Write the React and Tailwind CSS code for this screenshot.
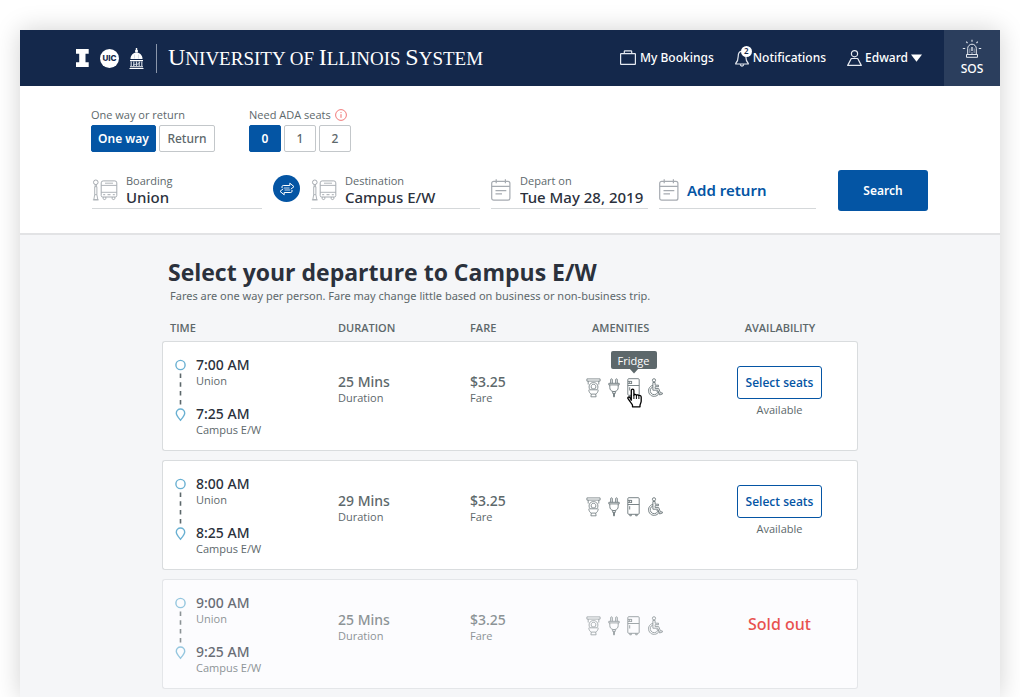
import React, { useState } from "react";

const ROWS = [
  { from: "7:00 AM", to: "7:25 AM", duration: "25 Mins", fare: "$3.25", available: true, hovered: true },
  { from: "8:00 AM", to: "8:25 AM", duration: "29 Mins", fare: "$3.25", available: true },
  { from: "9:00 AM", to: "9:25 AM", duration: "25 Mins", fare: "$3.25", available: false },
];

function BlockI() {
  return (
    <svg width="14" height="18" viewBox="0 0 14 18" fill="#fff" aria-hidden="true">
      <path d="M0 0h12.700v4.800H9.500v8.400h3.200V18H0v-4.800h3.200V4.800H0z" />
    </svg>
  );
}

function UicBadge() {
  return (
    <span className="flex h-[19px] w-[19px] items-center justify-center rounded-full bg-white font-[Inter,sans-serif] text-[8px] leading-none font-extrabold text-[#14284b]">
      UIC
    </span>
  );
}

function Dome() {
  return (
    <svg width="15" height="21" viewBox="0 0 15 21" fill="none" aria-hidden="true">
      <path d="M7.500 0v4" stroke="#fff" strokeWidth="1.400" />
      <circle cx="7.500" cy="3" r="1.500" fill="#fff" />
      <path d="M1.500 11C1.500 7 4.500 4.500 7.500 4.500s6 2.500 6 6.500z" fill="#fff" />
      <path d="M5.500 6.500v4M9.500 6.500v4" stroke="#b5bfce" strokeWidth=".5" />
      <path d="M1 12h13v1.200H1zM1 18.200h13v1H1zM.5 20h14v1H.5z" fill="#fff" />
      <path d="M2.200 13.500v4.500M4.800 13.500v4.500M7.500 13.500v4.500M10.200 13.500v4.500M12.800 13.500v4.500" stroke="#cdd4df" strokeWidth="1.200" />
      <path d="M4 17.500c1.500-2 5.500 0 7-3.500" stroke="#dfe4ec" strokeWidth=".9" />
    </svg>
  );
}

function Briefcase() {
  return (
    <svg width="16" height="16" viewBox="0 0 16 16" fill="none" stroke="#e6eaf1" strokeWidth="1.200" aria-hidden="true">
      <rect x=".6" y="3.600" width="14.800" height="10.800" rx=".5" />
      <path d="M4.300 3.500V1.500a.6.6 0 0 1 .6-.6h6.200a.6.6 0 0 1 .6.6v2" />
    </svg>
  );
}

function Bell() {
  return (
    <svg width="14" height="17" viewBox="0 0 14 17" fill="none" stroke="#e6eaf1" strokeWidth="1.200" strokeLinejoin="round" aria-hidden="true">
      <path d="M6.800 1.200C4 1.500 3.200 4 3.200 6.500c0 3-.6 5-2.500 7v.5h12.600v-.5c-1.900-2-2.500-4-2.500-7" />
      <path d="M5.300 14.300c.2 2.400 3.200 2.400 3.400 0" />
    </svg>
  );
}

function Person() {
  return (
    <svg width="15" height="17" viewBox="0 0 15 17" fill="none" stroke="#e6eaf1" strokeWidth="1.200" strokeLinejoin="round" aria-hidden="true">
      <circle cx="7.500" cy="3.700" r="3.100" />
      <path d="M4.300 8.500h6.400l3.600 6.900H.7z" />
    </svg>
  );
}

function Siren() {
  return (
    <svg width="20" height="20" viewBox="0 0 20 20" fill="none" stroke="#e6eaf1" aria-hidden="true">
      <path d="M5.700 15.500V9.500a4.300 4.300 0 0 1 8.600 0v6M4.500 15.500h11v2.800h-11z" />
      <path d="M10 8v4M10 13.500v1" strokeWidth="1.300" />
      <path d="M7.800 14V9.500M12.200 14V9.500" strokeWidth=".5" />
      <path d="M10 .8v2M4.300 2.600l1.200 1.500M15.700 2.600l-1.200 1.500M.8 9.500h2.400M16.800 9.500h2.400" strokeWidth="1.100" />
    </svg>
  );
}

function Info() {
  return (
    <svg width="12" height="12" viewBox="0 0 12 12" fill="none" stroke="#ef6b6b" aria-hidden="true">
      <circle cx="6" cy="6" r="5.400" strokeWidth=".9" />
      <path d="M6 5.200v3.600M6 3.100v1" />
    </svg>
  );
}

function BusStop() {
  return (
    <svg className="shrink-0" width="26" height="24" viewBox="0 0 26 24" fill="none" stroke="#a6abb1" aria-hidden="true">
      <circle cx="3.800" cy="4.300" r="2.300" />
      <path d="M3.200 6.600v2M4.400 6.600v2M2.700 8.700h2.200v8H2.700zM2.700 16.700l-.9 5h4l-.9-5M.9 21.900h5.800" strokeWidth=".9" />
      <path d="M11.200 2.900h11.600a2 2 0 0 1 2 2v12.600a1.500 1.500 0 0 1-1.500 1.500H10.700a1.500 1.500 0 0 1-1.500-1.500V4.900a2 2 0 0 1 2-2z" />
      <path d="M9.200 7.400h15.600M9.200 14.300h15.600M13 5.200h8" strokeWidth=".9" />
      <path d="M11.200 16.700h2M20.800 16.700h2M15.500 16.700h3M11.200 19v1.600c0 1.300 2.600 1.300 2.600 0V19M20.200 19v1.600c0 1.300 2.600 1.300 2.600 0V19" />
    </svg>
  );
}

function Calendar() {
  return (
    <svg className="shrink-0" width="20" height="22" viewBox="0 0 20 22" fill="none" stroke="#a6abb1" strokeWidth="1.200" aria-hidden="true">
      <rect x=".7" y="2.300" width="18.200" height="18.900" rx="2" />
      <path d="M.7 7.300h18.200M5.200.3v4M14.400.3v4M4.500 11.700h10.800M4.500 14.900h6.500" />
    </svg>
  );
}

function SwapArrows() {
  return (
    <svg width="18" height="14" viewBox="0 0 18 14" fill="none" stroke="#fff" strokeLinejoin="round" aria-hidden="true">
      <path d="M4 6V4.700c0-.7.500-1.200 1.200-1.200h6.600V1.200l4.200 3.400-3.200 2.600" />
      <path d="M14 8v1.300c0 .7-.5 1.200-1.200 1.200H6.200v2.300L2 9.400l3.200-2.600" />
      <path d="M6 6h5.500M6.500 8H12" strokeWidth=".8" />
    </svg>
  );
}

function Timeline() {
  return (
    <svg width="12" height="64" viewBox="0 0 12 64" fill="none" aria-hidden="true">
      <circle cx="6.500" cy="6" r="4.600" stroke="#69b0d2" strokeWidth="1.400" />
      <path d="M6.500 14.500V46" stroke="#5d686b" strokeWidth="1.600" strokeDasharray="4.500 4.300" />
      <path d="M6.500 61.200c-2-2.400-4.200-4.700-4.200-7a4.200 4.200 0 0 1 8.400 0c0 2.300-2.200 4.600-4.200 7z" stroke="#69b0d2" strokeWidth="1.400" />
    </svg>
  );
}

function Toilet() {
  return (
    <svg width="15" height="20" viewBox="0 0 15 20" fill="none" stroke="#6c777b" strokeWidth=".8" aria-hidden="true">
      <path d="M.9.9h13.200v2.200H.9zM2.200 3.100v3.400M12.800 3.100v3.400" />
      <path d="M3.900 11.800C1.800 8 4 4.600 7.500 4.600s5.700 3.400 3.600 7.200z" />
      <path d="M5.500 10.300c-.9-2.200.1-4 2-4s2.900 1.800 2 4c-.9.700-3.100.7-4 0z" />
      <path d="M2.800 11.800c.1 2.200 1.200 3.700 2.500 4.300h4.400c1.300-.6 2.400-2.100 2.500-4.300M5.300 16.100l-.4 2.700h5.200l-.4-2.700" />
    </svg>
  );
}

function Plug() {
  return (
    <svg width="12" height="20" viewBox="0 0 12 20" fill="none" stroke="#6c777b" strokeWidth=".9" aria-hidden="true">
      <path d="M2.700 5.300V1.500c0-.9 1.600-.9 1.600 0v3.800M7.700 5.300V1.500c0-.9 1.600-.9 1.600 0v3.800" />
      <path d="M.8 5.300h10.400v1.600H.8zM1.800 6.900v2.600c0 2.300 1.500 3.700 3.200 4h2c1.700-.3 3.200-1.700 3.200-4V6.900M4.700 13.500v1.900h2.600v-1.900M5.500 15.400v3.400h1v-3.400" />
    </svg>
  );
}

function Fridge() {
  return (
    <svg width="13" height="20" viewBox="0 0 13 20" fill="none" stroke="#6c777b" strokeWidth=".9" aria-hidden="true">
      <rect x=".8" y=".7" width="11.400" height="16.600" rx="1" />
      <path d="M.8 7.500h11.400M2.800 17.300v1.500h1.500v-1.500M8.700 17.300v1.500h1.500v-1.500M2.700 9.200v3.300" />
      <path d="M1 3.400h3.600M1 5.400h3.600M2.300 3.400v2M4.600 3v3" />
    </svg>
  );
}

function Wheelchair() {
  return (
    <svg width="16" height="20" viewBox="0 0 16 20" fill="none" stroke="#6c777b" strokeWidth=".9" strokeLinejoin="round" aria-hidden="true">
      <circle cx="7" cy="2.300" r="1.600" />
      <path d="M5.900 4.500h2.200v2.700h3.400v1.500H8.100v1.900h3.600l1.900 4.600 1.500-.5.400 1.300-2.900 1-1.900-4.800H5.900z" />
      <path d="M5.900 7.300a5.600 5.600 0 1 0 6.100 8.200l-.9-2.200M5.900 8.900a4 4 0 1 0 4.700 5.900l-.7-1.700" />
    </svg>
  );
}

function HandCursor() {
  return (
    <svg className="absolute top-[10px] left-0" width="16" height="20" viewBox="0 0 16 20" aria-hidden="true">
      <path
        d="M4.300 12.200V2.600c0-2 2.600-2 2.600 0v4.600c.2-1.100 2.300-1.100 2.500.3.400-1 2.300-.9 2.500.5.500-.9 2.300-.7 2.300 1v4.300c0 1.500-1.200 2.700-1.200 4v1.500H5.500v-1.500c0-1-1.600-2.400-2.400-3.800L1 10.700c-.6-1.500 1-2.200 1.900-1.200z"
        fill="#fff"
        stroke="#000"
        strokeWidth="1.300"
        strokeLinejoin="round"
      />
      <path d="M6.900 7v4M9.400 7.800V11M11.900 8.500V11" stroke="#000" />
    </svg>
  );
}

function Choice({ active, onClick, children, className = "" }) {
  return (
    <button
      type="button"
      aria-pressed={active}
      onClick={onClick}
      className={`h-[27px] rounded-[2px] border font-['Noto_Sans',sans-serif] text-xs leading-none ${
        active ? "border-[#0455a4] bg-[#0455a4] font-semibold text-white" : "border-[#c3c7ca] bg-white font-medium text-[#5d686b]"
      } ${className}`}
    >
      {children}
    </button>
  );
}

function Field({ id, label, value, icon, gap = "gap-2" }) {
  return (
    <div className={`flex h-9 min-w-0 items-center border-b border-[#d5d8da] ${gap}`}>
      {icon}
      <div className="flex min-w-0 flex-1 flex-col self-start">
        <label htmlFor={id} className="text-[11px] leading-4 font-medium text-[#5d686b]">
          {label}
        </label>
        <input
          id={id}
          defaultValue={value}
          className="h-[17px] w-full min-w-0 bg-transparent font-['Noto_Sans',sans-serif] text-[15px] leading-[17px] font-medium text-[#2b313c] outline-none"
        />
      </div>
    </div>
  );
}

function Stop({ time, place }) {
  return (
    <div className="flex flex-col">
      <span className="font-['Noto_Sans',sans-serif] text-sm leading-4 font-medium text-[#2b313c]">{time}</span>
      <span className="text-[11px] leading-4 text-[#5d686b]">{place}</span>
    </div>
  );
}

function Fact({ value, label }) {
  return (
    <div className="flex flex-col text-[#5d686b]">
      <span className="font-['Noto_Sans',sans-serif] text-sm leading-4 font-medium">{value}</span>
      <span className="text-[11px] leading-4">{label}</span>
    </div>
  );
}

function Departure({ row }) {
  const cell = `h-[110px] border-y p-0 align-top ${row.available ? "border-[#d9dcde] bg-white" : "border-[#e4e6e9] bg-[#fcfcfe]"}`;
  const fade = row.available ? "" : "opacity-70";
  return (
    <tr>
      <td className={`${cell} rounded-l-[3px] border-l pl-[11px]`}>
        <div className={`flex gap-[10px] pt-[15px] ${fade}`}>
          <div className="pt-[2px]">
            <Timeline />
          </div>
          <div className="flex flex-col gap-[17px]">
            <Stop time={row.from} place="Union" />
            <Stop time={row.to} place="Campus E/W" />
          </div>
        </div>
      </td>
      <td className={cell}>
        <div className={`pt-8 ${fade}`}>
          <Fact value={row.duration} label="Duration" />
        </div>
      </td>
      <td className={cell}>
        <div className={`pt-8 ${fade}`}>
          <Fact value={row.fare} label="Fare" />
        </div>
      </td>
      <td className={cell}>
        <div className={`flex gap-[7px] pt-9 ${fade}`}>
          <Toilet />
          <Plug />
          <span className="relative">
            <Fridge />
            {row.hovered && (
              <>
                <span role="tooltip" className="absolute -top-[27px] left-1/2 flex h-[18px] w-[46px] -translate-x-1/2 items-center justify-center rounded-[2px] bg-[#5d686b] text-[11px] leading-none text-white">
                  Fridge
                  <svg className="absolute top-[17px]" width="10" height="6" viewBox="0 0 10 6" fill="#5d686b" aria-hidden="true">
                    <path d="M0 0h10L5 5.500z" />
                  </svg>
                </span>
                <HandCursor />
              </>
            )}
          </span>
          <Wheelchair />
        </div>
      </td>
      <td className={`${cell} rounded-r-[3px] border-r pl-[2px]`}>
        {row.available ? (
          <div className="flex flex-col items-center gap-[3px] pt-6">
            <button type="button" className="h-[33px] w-[85px] rounded-[3px] border border-[#0455a4] bg-white text-xs font-semibold text-[#0455a4]">
              Select seats
            </button>
            <span className="text-[11px] leading-4 text-[#5d686b]">Available</span>
          </div>
        ) : (
          <div className="pt-8 text-center font-['Noto_Sans',sans-serif] text-base leading-6 font-medium text-[#e8514f]">Sold out</div>
        )}
      </td>
    </tr>
  );
}

export default function App() {
  const [trip, setTrip] = useState("One way");
  const [seats, setSeats] = useState(0);
  const th = "p-0 text-[11px] leading-2 font-semibold text-[#5d686b]";
  return (
    <div className="flex min-h-screen flex-col overflow-hidden bg-white px-5 pt-[30px] font-['Open_Sans',sans-serif]">
      <div className="flex flex-1 flex-col bg-[#f5f6f8] shadow-[0_0_24px_rgba(0,0,0,0.18)]">
        <header className="flex h-14 items-stretch justify-between bg-[#14284b] pl-14 text-white">
          <a href="#home" className="flex items-center">
            <span className="flex items-center gap-[10px]">
              <BlockI />
              <UicBadge />
              <Dome />
            </span>
            <span className="ml-3 h-[29px] w-px bg-[#8a96aa]" />
            <span className="ml-[11px] font-['Liberation_Serif',serif] text-[19px] leading-7 whitespace-nowrap">
              <span className="text-2xl leading-7">U</span>NIVERSITY OF <span className="text-2xl leading-7">I</span>LLINOIS <span className="text-2xl leading-7">S</span>YSTEM
            </span>
          </a>
          <nav className="flex items-stretch font-['Noto_Sans',sans-serif] text-xs font-medium">
            <a href="#bookings" className="flex items-center gap-1">
              <Briefcase />
              My Bookings
            </a>
            <a href="#notifications" className="ml-[21px] flex items-center gap-1">
              <span className="relative">
                <Bell />
                <span className="absolute -top-1 left-[6px] flex h-[11px] w-[11px] items-center justify-center rounded-full bg-white text-[8px] leading-none font-semibold text-[#14284b]">2</span>
              </span>
              Notifications
            </a>
            <button type="button" className="ml-[21px] flex items-center gap-[3px]">
              <Person />
              Edward
              <svg width="11" height="8" viewBox="0 0 11 8" fill="#fff" aria-hidden="true">
                <path d="M0 .5h11L5.500 7.800z" />
              </svg>
            </button>
            <button type="button" className="ml-[22px] flex w-14 flex-col items-center justify-center bg-[#2b3e5d] pt-[2px]">
              <Siren />
              <span className="leading-5">SOS</span>
            </button>
          </nav>
        </header>

        <form className="border-b-2 border-[#e2e3e5] bg-white pr-[72px] pl-[71px] pt-[21px] pb-[22px]" onSubmit={(e) => e.preventDefault()}>
          <div className="flex gap-[34px]">
            <fieldset>
              <legend className="text-[11px] leading-4 font-medium text-[#5d686b]">One way or return</legend>
              <div className="mt-[2px] flex gap-[3px]">
                <Choice active={trip === "One way"} onClick={() => setTrip("One way")} className="w-[65px]">
                  One way
                </Choice>
                <Choice active={trip === "Return"} onClick={() => setTrip("Return")} className="w-14">
                  Return
                </Choice>
              </div>
            </fieldset>
            <fieldset>
              <legend className="flex items-center gap-1 text-[11px] leading-4 font-medium text-[#5d686b]">
                Need ADA seats
                <Info />
              </legend>
              <div className="mt-[2px] flex gap-[3px]">
                {[0, 1, 2].map((n) => (
                  <Choice key={n} active={seats === n} onClick={() => setSeats(n)} className="w-8">
                    {n}
                  </Choice>
                ))}
              </div>
            </fieldset>
          </div>
          <div className="mt-[18px] grid grid-cols-[170fr_27px_169fr_157fr_157fr_101px] items-center gap-x-[11px] pl-px">
            <Field id="boarding" label="Boarding" value="Union" icon={<BusStop />} />
            <button type="button" aria-label="Swap stops" className="mb-1 flex h-[27px] w-[27px] items-center justify-center rounded-full bg-[#0455a4]">
              <SwapArrows />
            </button>
            <Field id="destination" label="Destination" value="Campus E/W" icon={<BusStop />} />
            <Field id="depart" label="Depart on" value="Tue May 28, 2019" icon={<Calendar />} gap="gap-[9px]" />
            <button type="button" className="flex h-9 items-center gap-2 border-b border-[#d5d8da] font-['Noto_Sans',sans-serif] text-[15px] font-semibold text-[#0455a4]">
              <Calendar />
              Add return
            </button>
            <button type="submit" className="ml-[11px] h-[41px] rounded-[3px] bg-[#0455a4] font-['Noto_Sans',sans-serif] text-xs font-semibold text-white">
              Search
            </button>
          </div>
        </form>

        <main className="mx-auto w-full max-w-[696px] flex-1 pt-[21px]">
          <h1 className="pl-[6px] text-[23px] leading-8 font-bold text-[#2b313c]">Select your departure to Campus E/W</h1>
          <p className="pl-2 font-['Noto_Sans',sans-serif] text-[11px] leading-4 text-[#5d686b]">Fares are one way per person. Fare may change little based on business or non-business trip.</p>
          <table className="mt-[11px] w-full table-fixed border-separate border-spacing-x-0 border-spacing-y-[9px]">
            <colgroup>
              <col className="w-[176px]" />
              <col className="w-[132px]" />
              <col className="w-[116px]" />
              <col className="w-[114px]" />
              <col className="w-[158px]" />
            </colgroup>
            <thead>
              <tr>
                <th className={`${th} pl-2 text-left`}>TIME</th>
                <th className={`${th} text-left`}>DURATION</th>
                <th className={`${th} text-left`}>FARE</th>
                <th className={`${th} pl-[6px] text-left`}>AMENITIES</th>
                <th className={`${th} pl-[2px] text-center`}>AVAILABILITY</th>
              </tr>
            </thead>
            <tbody>
              {ROWS.map((row) => (
                <Departure key={row.from} row={row} />
              ))}
            </tbody>
          </table>
        </main>
      </div>
    </div>
  );
}
